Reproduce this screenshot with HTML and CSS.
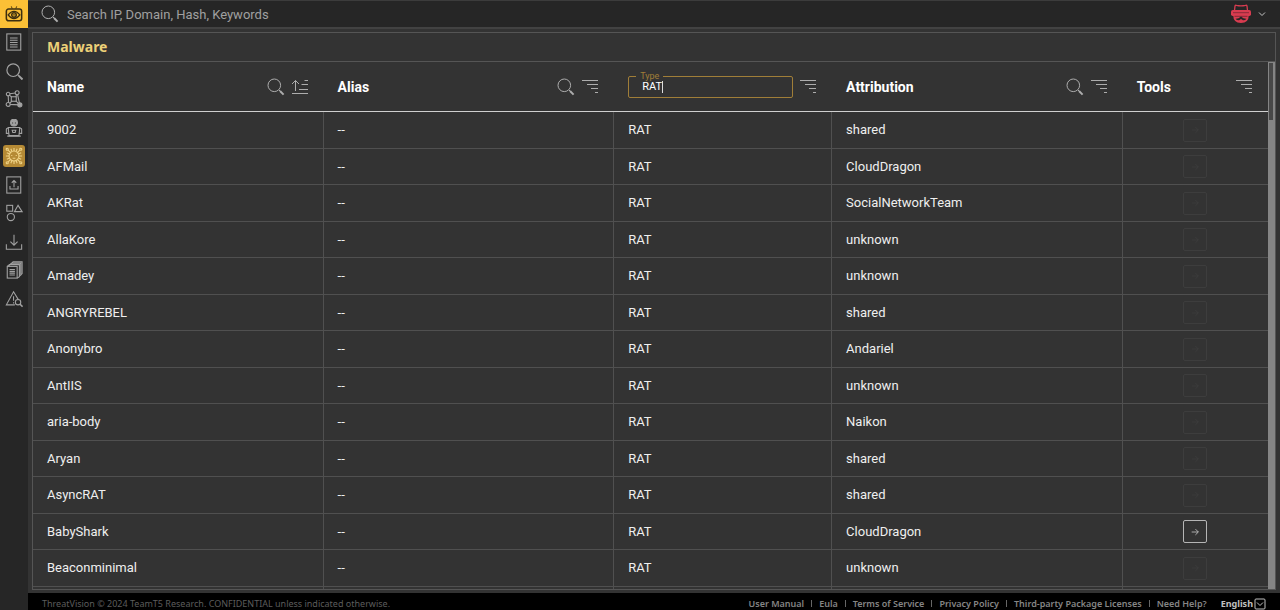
FILE: index.html
```html
<!DOCTYPE html>
<html lang="en">
<head>
<meta charset="utf-8">
<title>Malware</title>
<link rel="stylesheet" href="styles.css">
</head>
<body>
<svg class="sprite" aria-hidden="true">
  <symbol id="search" viewBox="0 0 18 18"><circle cx="7.3" cy="7.3" r="6.3"/><path d="M12 12l1.5 1.5"/><path d="M13 13l3.6 3.6" stroke-width="2"/></symbol>
  <symbol id="filter" viewBox="0 0 18 18"><path d="M0 2.500h16M5 6.500h11M9 10.500h7M13 14.500h3"/></symbol>
  <symbol id="sort" viewBox="0 0 18 18"><path d="M3.500 13V2.500M0 6l3.500-3.500L7 6M12.500 2.500H16M9.500 6.500H16M7 11.500h9M0 15.500h16"/></symbol>
  <symbol id="arrow" viewBox="0 0 24 24"><path d="M8 12h8M12.500 8.500L16 12l-3.500 3.500"/></symbol>
</svg>
<aside class="sidebar">
  <a class="logo" href="#" aria-label="Home"><svg class="icon" viewBox="0 0 20 20"><path d="M7 1.500l1 2.500M13 1.500L12 4"/><rect x="1.500" y="4.500" width="17" height="13" rx="2.500" stroke-width="1.700"/><path d="M3.500 11Q6.500 7 10 7t6.500 4q-3 4-6.500 4t-6.500-4z" stroke-width="1.500"/><circle cx="10" cy="11" r="2.500" stroke-width="1.700"/><circle cx="10" cy="11" r=".5"/></svg></a>
  <nav class="nav">
    <a href="#" aria-label="Reports"><svg class="icon" viewBox="0 0 20 20"><rect x="2" y="1" width="15.500" height="18"/><path d="M5.500 5.500h8.500M5.500 8h8.500M5.500 10.500h8.500M5.500 13h8.500M5.500 15.500h8.500"/></svg></a>
    <a href="#" aria-label="Search"><svg class="icon" viewBox="-1 -1 20 20"><use href="#search"/></svg></a>
    <a href="#" aria-label="Graph"><svg class="icon" viewBox="0 0 20 20"><path d="M3.500 4.500L13.500 3M3.500 4.500L4 16M4 16l12.500.5M13.500 3l3 13.500M3.500 4.500L7.500 8M13.500 3L12 8M4 16l4-4M12 12l4.500 4.500"/><rect x="7" y="7.500" width="5.500" height="5"/><g class="node"><circle cx="3.500" cy="4.500" r="2"/><circle cx="13.500" cy="3" r="2.200"/><circle cx="3.500" cy="16" r="2.200"/></g><circle cx="16.500" cy="16.500" r="2.300" fill="currentColor"/></svg></a>
    <a href="#" aria-label="Adversaries"><svg class="icon" viewBox="0 0 20 20"><circle cx="10" cy="4" r="3.800" fill="currentColor"/><path d="M8 4.500h1M11 4.500h1" stroke="#262626"/><path d="M4.500 16H1.500v-4.500q0-1.500 3-1.500M15.500 16h3v-4.500q0-1.500-3-1.500M2.500 19h15"/><path d="M3.500 9.500h13l-1 9h-11z"/><path d="M8 12.500l.7 2.500h2.600l.7-2.500z"/></svg></a>
    <a class="active" href="#" aria-label="Malware" aria-current="page"><svg class="icon" viewBox="0 0 20 20"><circle cx="10" cy="10" r="5.500"/><path d="M10 4.500V1M10 19v-3.500M4.500 10H1M19 10h-3.500M6 6L3.500 3.500M14 6l2.500-2.500M6 14l-2.500 2.500M14 14l2.500 2.500M7.500 4.500L6.500 2M12.500 4.500l1-2.500M4.500 7.500L2 6.500M15.500 7.500l2.500-1M4.500 12.500l-2.500 1M15.500 12.500l2.500 1M7.500 15.500l-1 2.500M12.500 15.500l1 2.500M7.500 9v1M12.500 9v1M8.500 12.500h3"/><circle cx="2.500" cy="2.500" r="1.200"/><circle cx="17.500" cy="2.500" r="1.200"/><circle cx="2.500" cy="17.500" r="1.200"/><circle cx="17.500" cy="17.500" r="1.200"/></svg></a>
    <a href="#" aria-label="Submit"><svg class="icon" viewBox="0 0 20 20"><rect x="2" y="1" width="15.500" height="18"/><path d="M10 12.500V5M7.500 7.500L10 5l2.500 2.500M5.500 11v3.500h9V11"/></svg></a>
    <a href="#" aria-label="Indicators"><svg class="icon" viewBox="0 0 20 20"><rect x="2" y="1.500" width="6.500" height="6.500"/><path d="M14.500 1.500L19 8.500h-8.500z"/><circle cx="6.500" cy="14.500" r="4"/></svg></a>
    <a href="#" aria-label="Downloads"><svg class="icon" viewBox="0 0 20 20"><path d="M10 2v11M6 9.500l4 4 4-4M1.500 12.500v5.500h17v-5.500"/></svg></a>
    <a href="#" aria-label="Documents"><svg class="icon" viewBox="0 0 20 20"><path d="M6.500 3.500L9 1h10v13l-2.500 2.500M4.500 5L7 2.500h10.500V16"/><path d="M2.500 6L5 4h11v13.500L13.500 19"/><rect x="2.500" y="6" width="11" height="13"/><path d="M5 9.500h6M5 11.500h6M5 13.500h6M5 15.500h6"/></svg></a>
    <a href="#" aria-label="Threats"><svg class="icon" viewBox="0 0 20 20"><path d="M11 16.500H1.500L9.500 2l5.500 9M9.500 7v5M9.500 13.500V15"/><circle cx="14.500" cy="13.500" r="3"/><path d="M16.500 15.500l3 3" stroke-width="1.700"/></svg></a>
  </nav>
</aside>
<div class="app">
  <header class="topbar">
    <label class="search-label" for="q"><svg class="icon"><use href="#search"/></svg></label>
    <input class="search" id="q" type="text" placeholder="Search IP, Domain, Hash, Keywords" aria-label="Search">
    <button class="account" type="button" aria-label="Account">
      <svg class="avatar" viewBox="0 0 20 20"><path d="M3.500 6.500l.5-4.500q.3-1 1.500-.7 4.500 1 9 0 1.200-.3 1.500.7l.5 4.500" fill="none" stroke="#d83c50" stroke-width="1.300"/><rect y="6" width="20" height="6" rx="1.800" fill="#d83c50"/><path d="M2.200 11h15.600q0 8-7.800 8t-7.800-8z" fill="#d83c50"/><path d="M2 8.700h16" stroke="#8a2a38"/><path d="M3.500 12.300h13" stroke="#6b2430" stroke-width=".8"/><path d="M4.500 14.800q3 .2 5.500-2.300 2.500 2.500 5.500 2.300-1.500 1.700-3.500 1.500l-2-1.200-2 1.200q-2 .2-3.500-1.500z" fill="#262626"/></svg>
      <svg class="chevron" viewBox="0 0 8 8"><path d="M1 2.500l3 3 3-3"/></svg>
    </button>
  </header>
  <main class="main">
    <section class="panel">
      <h1 class="title">Malware</h1>
      <div class="viewport">
        <div class="scroller">
          <table class="grid">
            <colgroup><col class="wide"><col class="wide"><col class="medium"><col class="wide"><col></colgroup>
            <thead>
              <tr>
                <th><div class="head"><span>Name</span><button type="button" aria-label="Search name"><svg class="icon"><use href="#search"/></svg></button><button type="button" aria-label="Sort name"><svg class="icon"><use href="#sort"/></svg></button></div></th>
                <th><div class="head"><span>Alias</span><button type="button" aria-label="Search alias"><svg class="icon"><use href="#search"/></svg></button><button type="button" aria-label="Sort alias"><svg class="icon"><use href="#filter"/></svg></button></div></th>
                <th><div class="head"><div class="field"><label for="type">Type</label><input id="type" type="text" value="RAT"><i class="caret"></i></div><button type="button" aria-label="Sort type"><svg class="icon"><use href="#filter"/></svg></button></div></th>
                <th><div class="head"><span>Attribution</span><button type="button" aria-label="Search attribution"><svg class="icon"><use href="#search"/></svg></button><button type="button" aria-label="Sort attribution"><svg class="icon"><use href="#filter"/></svg></button></div></th>
                <th><div class="head"><span>Tools</span><button type="button" aria-label="Sort tools"><svg class="icon"><use href="#filter"/></svg></button></div></th>
              </tr>
            </thead>
            <tbody>
              <tr><td>9002</td><td>--</td><td>RAT</td><td>shared</td><td><button class="go" type="button" disabled aria-label="Open tools"><svg class="icon"><use href="#arrow"/></svg></button></td></tr>
              <tr><td>AFMail</td><td>--</td><td>RAT</td><td>CloudDragon</td><td><button class="go" type="button" disabled aria-label="Open tools"><svg class="icon"><use href="#arrow"/></svg></button></td></tr>
              <tr><td>AKRat</td><td>--</td><td>RAT</td><td>SocialNetworkTeam</td><td><button class="go" type="button" disabled aria-label="Open tools"><svg class="icon"><use href="#arrow"/></svg></button></td></tr>
              <tr><td>AllaKore</td><td>--</td><td>RAT</td><td>unknown</td><td><button class="go" type="button" disabled aria-label="Open tools"><svg class="icon"><use href="#arrow"/></svg></button></td></tr>
              <tr><td>Amadey</td><td>--</td><td>RAT</td><td>unknown</td><td><button class="go" type="button" disabled aria-label="Open tools"><svg class="icon"><use href="#arrow"/></svg></button></td></tr>
              <tr><td>ANGRYREBEL</td><td>--</td><td>RAT</td><td>shared</td><td><button class="go" type="button" disabled aria-label="Open tools"><svg class="icon"><use href="#arrow"/></svg></button></td></tr>
              <tr><td>Anonybro</td><td>--</td><td>RAT</td><td>Andariel</td><td><button class="go" type="button" disabled aria-label="Open tools"><svg class="icon"><use href="#arrow"/></svg></button></td></tr>
              <tr><td>AntIIS</td><td>--</td><td>RAT</td><td>unknown</td><td><button class="go" type="button" disabled aria-label="Open tools"><svg class="icon"><use href="#arrow"/></svg></button></td></tr>
              <tr><td>aria-body</td><td>--</td><td>RAT</td><td>Naikon</td><td><button class="go" type="button" disabled aria-label="Open tools"><svg class="icon"><use href="#arrow"/></svg></button></td></tr>
              <tr><td>Aryan</td><td>--</td><td>RAT</td><td>shared</td><td><button class="go" type="button" disabled aria-label="Open tools"><svg class="icon"><use href="#arrow"/></svg></button></td></tr>
              <tr><td>AsyncRAT</td><td>--</td><td>RAT</td><td>shared</td><td><button class="go" type="button" disabled aria-label="Open tools"><svg class="icon"><use href="#arrow"/></svg></button></td></tr>
              <tr><td>BabyShark</td><td>--</td><td>RAT</td><td>CloudDragon</td><td><button class="go" type="button" aria-label="Open tools"><svg class="icon"><use href="#arrow"/></svg></button></td></tr>
              <tr><td>Beaconminimal</td><td>--</td><td>RAT</td><td>unknown</td><td><button class="go" type="button" disabled aria-label="Open tools"><svg class="icon"><use href="#arrow"/></svg></button></td></tr>
              <tr><td></td><td></td><td></td><td></td><td></td></tr>
            </tbody>
          </table>
        </div>
        <div class="track"><div class="thumb"></div></div>
      </div>
    </section>
  </main>
  <footer class="footer">
    <p>ThreatVision © 2024 TeamT5 Research. CONFIDENTIAL unless indicated otherwise.</p>
    <ul class="links">
      <li><a href="#">User Manual</a></li>
      <li><a href="#">Eula</a></li>
      <li><a href="#">Terms of Service</a></li>
      <li><a href="#">Privacy Policy</a></li>
      <li><a href="#">Third-party Package Licenses</a></li>
      <li><a href="#">Need Help?</a></li>
    </ul>
    <button class="lang" type="button">English<svg class="icon" viewBox="0 0 12 12"><rect x="1" y="1" width="10" height="10" rx="1"/><path d="M3 4.500l3 3 3-3"/></svg></button>
  </footer>
</div>
</body>
</html>
```

FILE: styles.css
```css
* { box-sizing: border-box; }
body {
  margin: 0;
  display: flex;
  height: 100vh;
  overflow: hidden;
  background: #333;
  color: #efefef;
  font: 13px/18px Roboto, sans-serif;
}
button {
  display: flex;
  align-items: center;
  justify-content: center;
  padding: 0;
  border: 0;
  background: none;
  color: inherit;
  font: inherit;
}
a { color: inherit; text-decoration: none; }
.sprite { position: absolute; width: 0; height: 0; }
.icon, .chevron {
  display: block;
  flex: none;
  width: 18px;
  height: 18px;
  fill: none;
  stroke: currentColor;
  stroke-width: 1;
}

.sidebar {
  flex: none;
  width: 28px;
  background: #262626;
  color: #a2a2a2;
}
.logo {
  display: grid;
  place-items: center;
  height: 28px;
  background: #fbc036;
  color: #3c2f10;
}
.nav {
  display: grid;
  grid-auto-rows: 1fr;
  height: 285px;
}
.nav a {
  display: grid;
  place-items: center;
}
.nav .icon { stroke-width: 1.2; }
.node { fill: #262626; }
.nav .active .icon {
  box-sizing: content-box;
  padding: 2px;
  border-radius: 3px;
  background: #b58a35;
  color: #f0d488;
}

.app {
  flex: 1;
  min-width: 0;
  display: flex;
  flex-direction: column;
}
.topbar {
  display: flex;
  align-items: center;
  height: 29px;
  padding: 0 14px 0 13px;
  border-top: 1px solid #3c3c3c;
  border-bottom: 2px solid #424242;
  background: #262626;
}
.search-label { color: #b0b0b0; }
.search {
  flex: 1;
  height: 24px;
  padding: 0 8px;
  border: 0;
  outline: 0;
  background: none;
  color: #eee;
  font: inherit;
}
.search::placeholder { color: #a0a0a0; opacity: 1; }
.account { gap: 7px; color: #c4c4c4; }
.avatar { width: 20px; height: 20px; }
.chevron { width: 8px; height: 8px; }

.main {
  flex: 1;
  min-height: 0;
  display: flex;
  padding: 3px 4px;
}
.panel {
  flex: 1;
  min-width: 0;
  display: flex;
  flex-direction: column;
  border: 1px solid #555;
}
.title {
  margin: 0;
  padding: 4px 14px;
  border-bottom: 1px solid #555;
  color: #ecd078;
  font: bold 14px/20px "Noto Sans", sans-serif;
}
.viewport {
  flex: 1;
  min-height: 0;
  display: flex;
}
.scroller { flex: 1; min-width: 0; overflow: hidden; }
.track {
  width: 7px;
  padding: 1px 2px 1px 1px;
  background: #858585;
}
.thumb { height: 57px; background: #484848; }

.grid {
  width: 100%;
  table-layout: fixed;
  border-collapse: separate;
  border-spacing: 0;
}
.wide { width: calc(100% * 4 / 17); }
.medium { width: calc(100% * 3 / 17); }
th {
  height: 50px;
  padding: 0 14px;
  border-bottom: 1px solid #d0d0d0;
  color: #fff;
  font-size: 14px;
  text-align: left;
}
.head {
  display: flex;
  align-items: center;
  gap: 7px;
}
.head span { flex: 1; }
.head button { color: #adadad; }
.field {
  position: relative;
  flex: 1;
  min-width: 0;
}
.field input {
  display: block;
  width: 100%;
  height: 22px;
  padding: 0 13px;
  border: 1px solid #a07e38;
  border-radius: 2px;
  outline: 0;
  background: none;
  color: #fff;
  font: 11px/16px Roboto, sans-serif;
}
.field label {
  position: absolute;
  top: -5px;
  left: 8px;
  padding: 0 4px;
  background: #333;
  color: #a07e38;
  font: 9px/10px Roboto, sans-serif;
}
.caret {
  position: absolute;
  top: 5px;
  left: 34px;
  width: 1px;
  height: 12px;
  background: #ddd;
}
td {
  height: 36px;
  padding: 0 14px;
  border-right: 1px solid #505050;
  border-bottom: 1px solid #505050;
}
tr:nth-child(odd) td { height: 37px; }
td:last-child { border-right: 0; }
.go {
  width: 24px;
  height: 23px;
  margin: 0 auto;
  border: 1px solid #b5b5b5;
  border-radius: 2px;
  color: #c4c4c4;
}
.go:disabled { border-color: #3d3d3d; color: #3d3d3d; }
.go .icon { width: 20px; height: 20px; }

.footer {
  display: flex;
  align-items: center;
  height: 17px;
  padding: 4px 14px 0;
  background: #000;
  color: #858585;
  font: 600 9px/12px "Noto Sans", sans-serif;
}
.footer p {
  flex: 1;
  margin: 0;
  color: #5c5c5c;
  font-weight: normal;
}
.links {
  display: flex;
  margin: 0;
  padding: 0;
  list-style: none;
}
.links li { display: flex; align-items: center; }
.links li + li::before {
  content: "";
  width: 1px;
  height: 7px;
  margin: 0 7px;
  background: #666;
}
.lang { gap: 1px; margin-left: 14px; color: #c0c0c0; font-weight: bold; }
.lang .icon { width: 12px; height: 12px; }
```
